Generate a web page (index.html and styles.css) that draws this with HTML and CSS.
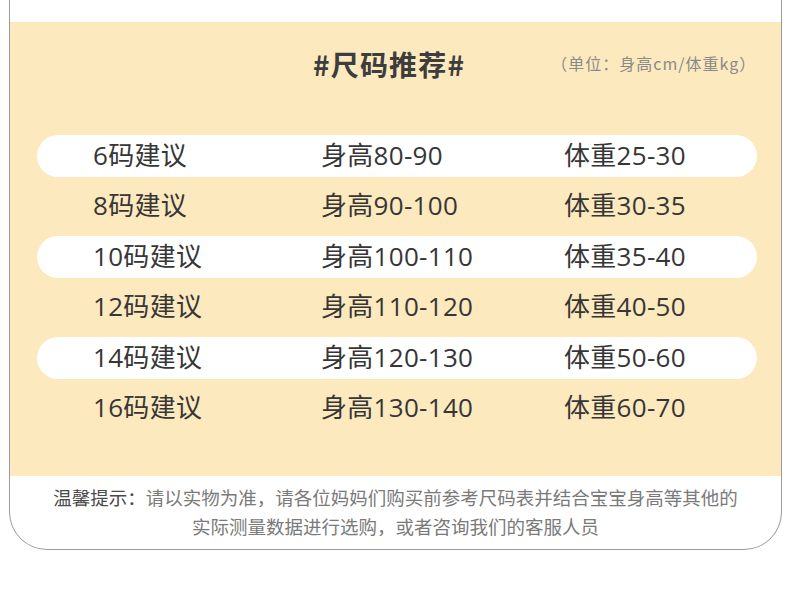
FILE: index.html
```html
<!DOCTYPE html>
<html lang="zh">
<head>
<meta charset="utf-8">
<title>尺码推荐</title>
<link rel="stylesheet" href="styles.css">
</head>
<body>
<div class="card">
  <div class="panel">
    <div class="header">
      <h1 class="title">#尺码推荐#</h1>
      <span class="unit">（单位：身高cm/体重kg）</span>
    </div>
    <div class="rows">
      <div class="row alt"><span>6码建议</span><span>身高80-90</span><span>体重25-30</span></div>
      <div class="row"><span>8码建议</span><span>身高90-100</span><span>体重30-35</span></div>
      <div class="row alt"><span>10码建议</span><span>身高100-110</span><span>体重35-40</span></div>
      <div class="row"><span>12码建议</span><span>身高110-120</span><span>体重40-50</span></div>
      <div class="row alt"><span>14码建议</span><span>身高120-130</span><span>体重50-60</span></div>
      <div class="row"><span>16码建议</span><span>身高130-140</span><span>体重60-70</span></div>
    </div>
  </div>
  <div class="footer">
    <p><span class="tip">温馨提示：</span>请以实物为准，请各位妈妈们购买前参考尺码表并结合宝宝身高等其他的<br>实际测量数据进行选购，或者咨询我们的客服人员</p>
  </div>
</div>
</body>
</html>
```

FILE: styles.css
```css
* { box-sizing: border-box; }

body {
  margin: 0;
  background: #ffffff;
  font-family: "Noto Sans CJK SC", "Noto Sans", sans-serif;
  color: #3a3a3a;
}

.card {
  margin-left: 9px;
  width: 773px;
  padding-top: 22px;
  border: 1px solid #9a9a9a;
  border-top: none;
  border-radius: 0 0 38px 38px;
  overflow: hidden;
  background: #ffffff;
}

.panel {
  background: #fde9be;
  height: 454px;
  padding-top: 28px;
}

.header {
  display: flex;
  align-items: center;
  padding-left: 303px;
}

.title {
  margin: 0;
  font-size: 28px;
  line-height: 28px;
  font-weight: 700;
  color: #3d3d3d;
  letter-spacing: 1.2px;
}

.unit {
  margin-left: 86px;
  font-size: 16px;
  line-height: 20px;
  color: #8a8a8a;
  letter-spacing: 1px;
  margin-top: -3px;
}

.rows {
  margin: 57px 24px 0 27px;
  display: flex;
  flex-direction: column;
  gap: 8.5px;
}

.row {
  height: 42px;
  border-radius: 21px;
  display: grid;
  grid-template-columns: 228px 243px 1fr;
  align-items: center;
  padding-left: 56px;
  padding-bottom: 3px;
  font-family: "Open Sans", "Noto Sans CJK SC", sans-serif;
  font-size: 26px;
  line-height: 30px;
  letter-spacing: 0.3px;
  color: #363636;
}

.row.alt {
  background: #ffffff;
}

.footer {
  padding: 7px 0 8px;
  text-align: center;
}

.footer p {
  margin: 0;
  font-size: 18.5px;
  line-height: 29px;
  color: #7a7a7a;
}

.tip {
  color: #4a4a4a;
}
```
